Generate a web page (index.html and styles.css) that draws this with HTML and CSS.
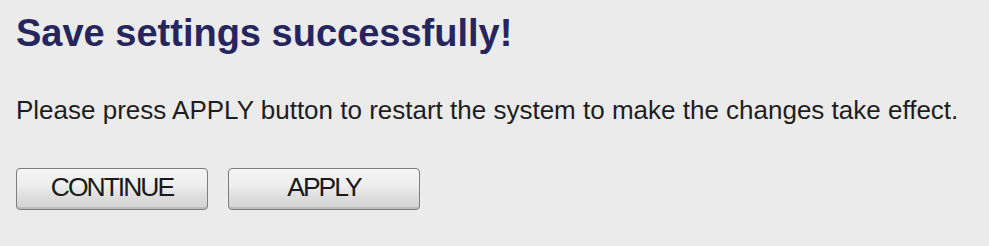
FILE: index.html
```html
<!DOCTYPE html>
<html>
<head>
<meta charset="utf-8">
<link rel="stylesheet" href="styles.css">
</head>
<body>
<div class="page">
  <h1 class="title">Save settings successfully!</h1>
  <p class="msg">Please press APPLY button to restart the system to make the changes take effect.</p>
  <div class="actions">
    <button class="btn">CONTINUE</button>
    <button class="btn">APPLY</button>
  </div>
</div>
</body>
</html>
```
FILE: styles.css
```css
html, body {
  margin: 0;
  padding: 0;
  background: #ebebeb;
}
.page {
  width: 989px;
  height: 246px;
  box-sizing: border-box;
  padding: 11px 0 0 16px;
  font-family: "Liberation Sans", Arial, sans-serif;
}
.title {
  margin: 0;
  font-size: 38px;
  line-height: 44px;
  font-weight: bold;
  color: #26265e;
}
.msg {
  margin: 40px 0 0 0;
  font-size: 26px;
  line-height: 30px;
  color: #1e1e1e;
}
.actions {
  display: flex;
  gap: 20px;
  margin-top: 43px;
}
.btn {
  width: 192px;
  height: 42px;
  box-sizing: border-box;
  border: 1.5px solid #7d7d7d;
  border-radius: 4px;
  background: linear-gradient(#f4f4f4 0%, #eeeeee 40%, #dddddd 70%, #d2d2d2 100%);
  font-family: "Liberation Sans", Arial, sans-serif;
  font-size: 26.5px;
  letter-spacing: -2px;
  color: #1a1a1a;
  padding: 0 0 3px 0;
  box-shadow: inset 0 -6px 0 -4px rgba(150,150,150,0.35);
}
```
